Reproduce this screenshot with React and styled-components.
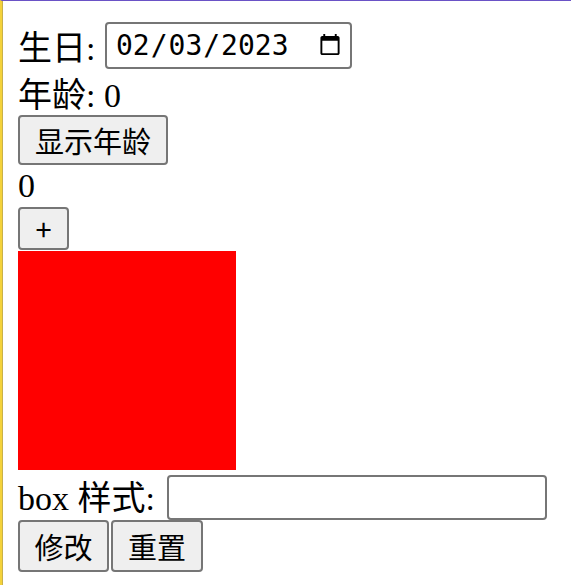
import React, { useState } from "react";
import styled, { createGlobalStyle } from "styled-components";

const GlobalStyle = createGlobalStyle`
  html, body {
    margin: 0;
    padding: 0;
    background: #ffffff;
  }
  body {
    font-family: "Liberation Serif", "Noto Sans CJK SC", serif;
    font-size: 34px;
    color: #000000;
  }
`;

const Frame = styled.div`
  min-height: 585px;
  border-top: 1px solid #6a52c6;
  border-left: 2px solid #f4d23a;
  box-shadow: inset 1px 0 0 #c9b14a;
  padding: 21px 0 0 16px;
  box-sizing: border-box;
`;

const Line = styled.div`
  display: flex;
  align-items: center;
  height: ${(p) => p.$h || 46}px;
  white-space: pre;
`;

const DateInput = styled.input`
  width: 247px;
  height: 47px;
  box-sizing: border-box;
  margin: 0 0 0 1px;
  padding: 0 8px 0 8px;
  border: 2px solid #767676;
  border-radius: 4px;
  font-family: "DejaVu Sans Mono", "Liberation Mono", monospace;
  font-size: 28px;
  color: #000;
  &::-webkit-calendar-picker-indicator {
    width: 24px;
    height: 25px;
    margin-left: 10px;
    padding: 0;
  }
`;

const TextInput = styled.input`
  width: 380px;
  height: 45px;
  box-sizing: border-box;
  margin: 4px 0 0 4px;
  padding: 0 6px;
  border: 2px solid #767676;
  border-radius: 4px;
  font-size: 24px;
`;

const Button = styled.button`
  display: block;
  box-sizing: border-box;
  width: ${(p) => p.$w}px;
  height: ${(p) => p.$h || 50}px;
  margin: 0 2px 0 0;
  padding: 0;
  border: 2px solid #767676;
  border-radius: 4px;
  background: #efefef;
  font-family: "Noto Sans CJK SC", "Liberation Sans", sans-serif;
  font-size: 29px;
  line-height: 1;
  color: #000;
`;

const Row = styled.div`
  display: flex;
`;

const Box = styled.div`
  width: 218px;
  height: 219px;
  margin-top: 1px;
  background: ${(p) => p.$color};
`;

export default function App() {
  const [birthday, setBirthday] = useState("2023-02-03");
  const [count, setCount] = useState(0);
  const [style, setStyle] = useState("");

  return (
    <>
      <GlobalStyle />
      <Frame>
        <Line $h={47}>
          生日: <DateInput type="date" value={birthday} onChange={(e) => setBirthday(e.target.value)} />
        </Line>
        <Line $h={46}>年龄: 0</Line>
        <Button $w={150} $h={50}>显示年龄</Button>
        <Line $h={42}>{count}</Line>
        <Button $w={51} $h={43} onClick={() => setCount(count + 1)}>+</Button>
        <Box $color="#ff0000" />
        <Line $h={50}>
          box 样式: <TextInput value={style} onChange={(e) => setStyle(e.target.value)} />
        </Line>
        <Row>
          <Button $w={91} $h={52}>修改</Button>
          <Button $w={92} $h={52}>重置</Button>
        </Row>
      </Frame>
    </>
  );
}
